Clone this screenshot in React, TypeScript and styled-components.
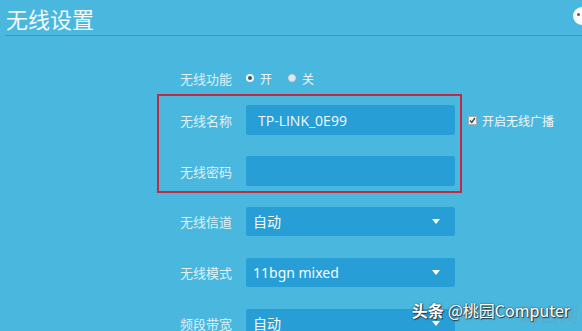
import React from "react";
import styled, { createGlobalStyle } from "styled-components";

const GlobalStyle = createGlobalStyle`
  html, body {
    margin: 0;
    padding: 0;
    background: #4ab8de;
  }
  body {
    font-family: "Noto Sans CJK SC", "Noto Sans", sans-serif;
  }
`;

const Page = styled.div`
  position: relative;
  width: 582px;
  height: 331px;
  overflow: hidden;
  background: #4ab8de;
  color: #eaf6fb;
`;

const Header = styled.div`
  margin-left: 5px;
  height: 36px;
  border-bottom: 1px solid #2b9ccf;
  box-sizing: border-box;
  display: flex;
  align-items: center;
`;

const Title = styled.h1`
  margin: 0;
  padding-left: 1px;
  font-size: 22px;
  font-weight: 400;
  line-height: 1;
  color: #f2fafd;
`;

const Avatar = styled.div`
  position: absolute;
  top: 7px;
  right: -9px;
  width: 18px;
  height: 18px;
  border-radius: 50%;
  background: #fbfbfb;
  &::before {
    content: "";
    position: absolute;
    left: 4px;
    top: 6px;
    width: 3px;
    height: 3px;
    border-radius: 50%;
    background: #8a4a3a;
  }
`;

const Form = styled.div`
  display: flex;
  flex-direction: column;
  padding: 27px 0 0 159px;
`;

const Row = styled.div`
  display: flex;
  align-items: center;
  height: 30px;
  white-space: nowrap;
`;

const Label = styled.span`
  flex: 0 0 73px;
  text-align: right;
  font-size: 13px;
  color: #dff0f7;
  margin-right: 14px;
`;

const Group = styled.div`
  width: 301px;
  margin: 1px 0 13px -2px;
  padding: 9px 0 5px 0;
  border: 2px solid #c12a40;
  display: flex;
  flex-direction: column;
  gap: 21px;
`;

const SelectList = styled.div`
  display: flex;
  flex-direction: column;
  gap: 21px;
`;

const Field = styled.div`
  flex: 0 0 209px;
  height: 30px;
  box-sizing: border-box;
  background: #279fd6;
  border-radius: 2px;
  display: flex;
  align-items: center;
  padding-left: 12px;
  font-family: "Open Sans", "Noto Sans", sans-serif;
  font-size: 14px;
  color: #f4fbfe;
`;

const Select = styled(Field)`
  height: 29px;
  padding: 0 15px 0 7px;
  justify-content: space-between;
  font-family: "Noto Sans", "Noto Sans CJK SC", sans-serif;
`;

const Arrow = styled.span`
  width: 0;
  height: 0;
  border-left: 4px solid transparent;
  border-right: 4px solid transparent;
  border-top: 5px solid #ffffff;
`;

const Radio = styled.span<{ $on?: boolean }>`
  display: inline-block;
  width: 8px;
  height: 8px;
  border-radius: 50%;
  box-sizing: border-box;
  background: ${(p) => (p.$on ? "#3f5560" : "#e6e6e6")};
  border: ${(p) => (p.$on ? "2px solid #f2f2f2" : "1px solid #cfd6d9")};
  margin-right: 6px;
`;

const Option = styled.span`
  display: inline-flex;
  align-items: center;
  font-size: 12px;
  color: #eef7fb;
  margin-right: 16px;
`;

const Check = styled.label`
  display: inline-flex;
  align-items: center;
  margin-left: 13px;
  font-size: 12px;
  color: #eef7fb;
`;

const Box = styled.span`
  width: 9px;
  height: 9px;
  box-sizing: border-box;
  border: 1px solid #9fb0b8;
  background: #f4f4f4;
  margin-right: 5px;
  display: inline-flex;
  align-items: center;
  justify-content: center;
`;

const Watermark = styled.div`
  position: absolute;
  right: 12px;
  bottom: 9px;
  font-size: 16px;
  color: #ffffff;
  text-shadow: 0 0 2px #2a3a44, 1px 1px 1px #2a3a44;
  white-space: nowrap;
  font-family: "Noto Sans CJK SC", "Noto Sans", sans-serif;
  b {
    font-weight: 700;
    margin-right: 4px;
  }
`;

const Stamp = styled.div`
  position: absolute;
  right: 2px;
  bottom: 4px;
  font-size: 19px;
  color: rgba(120, 150, 160, 0.35);
  letter-spacing: 1px;
`;

const App = () => {
  return (
    <>
      <GlobalStyle />
      <Page>
        <Header>
          <Title>无线设置</Title>
        </Header>
        <Avatar />
        <Form>
          <Row>
            <Label>无线功能</Label>
            <Option>
              <Radio $on />开
            </Option>
            <Option>
              <Radio />关
            </Option>
          </Row>
          <Group>
            <Row>
              <Label>无线名称</Label>
              <Field>TP-LINK_0E99</Field>
              <Check>
                <Box>
                  <svg width="7" height="7" viewBox="0 0 7 7">
                    <path d="M1 3.6 L2.8 5.4 L6 1" stroke="#3a4650" strokeWidth="1.4" fill="none" />
                  </svg>
                </Box>
                开启无线广播
              </Check>
            </Row>
            <Row>
              <Label>无线密码</Label>
              <Field />
            </Row>
          </Group>
          <SelectList>
            <Row>
              <Label>无线信道</Label>
              <Select>
                自动
                <Arrow />
              </Select>
            </Row>
            <Row>
              <Label>无线模式</Label>
              <Select>
                11bgn mixed
                <Arrow />
              </Select>
            </Row>
            <Row>
              <Label>频段带宽</Label>
              <Select>
                自动
                <Arrow />
              </Select>
            </Row>
          </SelectList>
        </Form>
        <Stamp>路由网</Stamp>
        <Watermark>
          <b>头条</b>@桃园Computer
        </Watermark>
      </Page>
    </>
  );
};

export default App;
